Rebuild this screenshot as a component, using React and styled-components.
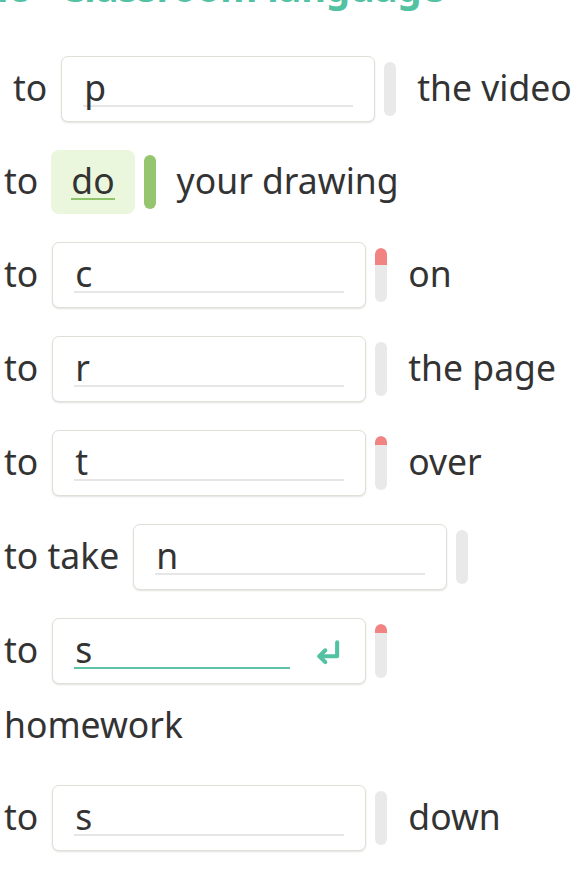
import React from "react";
import styled, { createGlobalStyle } from "styled-components";

const GlobalStyle = createGlobalStyle`
  body {
    margin: 0;
    background: #fff;
    font-family: "Noto Sans", "Open Sans", sans-serif;
    color: #333;
    overflow: hidden;
  }
`;

const Page = styled.div`
  padding-left: 4px;
`;

const Title = styled.h1`
  margin: -35px 0 45px -74px;
  font-size: 38px;
  line-height: 1.2;
  font-weight: 700;
  color: #52c2a2;
  white-space: nowrap;
`;

const Row = styled.div`
  display: flex;
  flex-wrap: wrap;
  align-items: center;
  margin: 0 0 28px ${props => props.indent || 0}px;
`;

const Break = styled.div`
  flex-basis: 100%;
  height: 11px;
`;

const Text = styled.span`
  font-size: 35.5px;
  line-height: 58px;
  padding-bottom: 4px;
  white-space: nowrap;
  margin-left: ${props => props.gap || 0}px;
`;

const Box = styled.div`
  box-sizing: border-box;
  width: 314px;
  height: 66px;
  margin-left: 14px;
  padding: 12px 21px 0 24px;
  display: flex;
  align-items: flex-start;
  background: #fff;
  border: 1.5px solid #e2dfd7;
  border-radius: 7px;
  box-shadow: 0 1px 2px rgba(0, 0, 0, 0.12);
`;

const Field = styled.div`
  flex: 1;
  height: 36px;
  font-size: 35.5px;
  line-height: 36px;
  margin-left: -3px;
  padding-left: 1px;
  border-bottom: 2px solid ${props => (props.active ? "#5cc4a5" : "#e6e6e6")};
  margin-right: ${props => (props.active ? "24px" : "0")};
`;

const Done = styled.div`
  box-sizing: border-box;
  height: 64px;
  margin-left: 13px;
  padding: 12px 20px 0;
  background: #eaf7dd;
  border-radius: 8px;
`;

const DoneWord = styled.span`
  display: block;
  font-size: 35.5px;
  line-height: 36px;
  border-bottom: 2px solid #8fc46b;
`;

const Bar = styled.div`
  width: 12px;
  height: 54px;
  margin-left: 9px;
  border-radius: 6px;
  overflow: hidden;
  background: ${props => (props.done ? "#96c56f" : "#e9e9e9")};
  flex-shrink: 0;
`;

const Fill = styled.div`
  height: ${props => props.size}px;
  background: #f18383;
  border-radius: 6px 6px 0 0;
`;

const Enter = styled.svg`
  width: 28px;
  height: 28px;
  margin-top: 8px;
  margin-right: 2px;
  flex-shrink: 0;
`;

const EnterIcon = () => (
  <Enter viewBox="0 0 26 26" fill="none" stroke="#52c2a2" strokeWidth="3.8" strokeLinecap="round" strokeLinejoin="round">
    <path d="M21.5 3v13H5" />
    <path d="M10.5 10.5 5 16l5.5 5.5" />
  </Enter>
);

const Blank = ({ letter, fail, active }) => (
  <>
    <Box>
      <Field active={active}>{letter}</Field>
      {active && <EnterIcon />}
    </Box>
    <Bar>{fail ? <Fill size={fail} /> : null}</Bar>
  </>
);

const rows = [
  { before: "to", letter: "c", after: "on", fail: 17 },
  { before: "to", letter: "r", after: "the page" },
  { before: "to", letter: "t", after: "over", fail: 9 },
  { before: "to take", letter: "n" },
  { before: "to", letter: "s", after: "homework", fail: 9, active: true, wrap: true },
  { before: "to", letter: "s", after: "down" }
];

const App = () => (
  <Page>
    <GlobalStyle />
    <Title>Topic - Classroom language</Title>
    <Row indent={9}>
      <Text>to</Text>
      <Blank letter="p" />
      <Text gap={21}>the video</Text>
    </Row>
    <Row>
      <Text>to</Text>
      <Done>
        <DoneWord>do</DoneWord>
      </Done>
      <Bar done />
      <Text gap={21}>your drawing</Text>
    </Row>
    {rows.map((r, i) => (
      <Row key={i}>
        <Text>{r.before}</Text>
        <Blank letter={r.letter} fail={r.fail} active={r.active} />
        {r.wrap && <Break />}
        {r.after && <Text gap={r.wrap ? 0 : 21}>{r.after}</Text>}
      </Row>
    ))}
  </Page>
);

export default App;
